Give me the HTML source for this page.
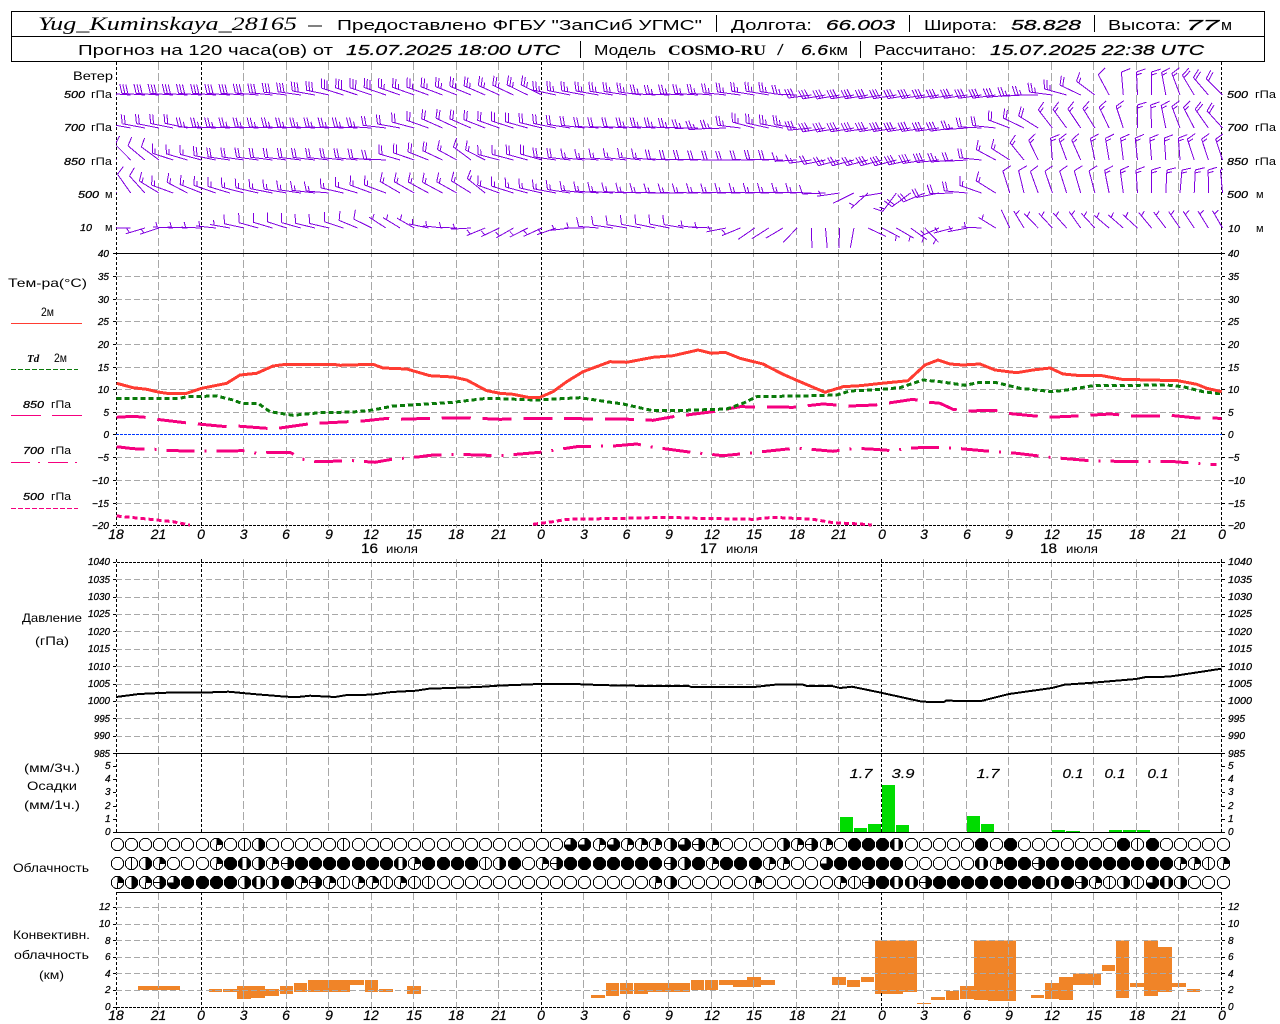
<!DOCTYPE html>
<html lang="ru">
<head>
<meta charset="utf-8">
<title>Yug_Kuminskaya_28165</title>
<style>
html,body{margin:0;padding:0;background:#fff;width:1280px;height:1024px;overflow:hidden}
svg{display:block;position:absolute;left:0;top:0}
text{font-family:"Liberation Sans",sans-serif;fill:#000;white-space:pre}
.h{font-size:15px}
.hi{font-size:15px;font-style:italic;stroke:#000;stroke-width:.25}
.s{font-size:12px}
.si{font-size:11px;font-style:italic;font-weight:bold}
.y{font-size:10px;font-style:italic;stroke:#000;stroke-width:.25}
.p{font-size:10px;font-style:italic;stroke:#000;stroke-width:.25}
.x{font-size:14px;font-style:italic;text-anchor:middle;stroke:#000;stroke-width:.2}
.v{font-size:13px;font-style:italic;text-anchor:middle;stroke:#000;stroke-width:.15}
</style>
</head>
<body>
<svg id="g" width="1280" height="1024" viewBox="0 0 1280 1024" xmlns="http://www.w3.org/2000/svg">
<g id="shapes" shape-rendering="crispEdges"></g>

<!-- header -->
<text x="38" y="30" style="font-family:'Liberation Serif',serif;font-style:italic;font-size:19px" textLength="259">Yug_Kuminskaya_28165</text>
<text class="h" x="308" y="30" textLength="14">—</text>
<text class="h" x="337" y="30" textLength="365">Предоставлено ФГБУ "ЗапСиб УГМС"</text>
<text class="h" x="731" y="30" textLength="81">Долгота:</text>
<text class="hi" x="826" y="30" textLength="69">66.003</text>
<text class="h" x="924" y="30" textLength="73">Широта:</text>
<text class="hi" x="1011" y="30" textLength="70">58.828</text>
<text class="h" x="1108" y="30" textLength="73">Высота:</text>
<text class="hi" x="1186" y="30" textLength="33">77</text>
<text class="h" x="1221" y="30" textLength="11">м</text>

<text class="h" x="78" y="55" textLength="255">Прогноз на 120 часа(ов) от</text>
<text class="hi" x="346" y="55" textLength="214">15.07.2025 18:00 UTC</text>
<text class="h" x="594" y="55" textLength="62">Модель</text>
<text x="668" y="55" style="font-family:'Liberation Serif',serif;font-weight:bold;font-size:15px" textLength="98">COSMO-RU</text>
<text class="hi" x="778" y="55">/</text>
<text class="hi" x="801" y="55" textLength="27">6.6</text>
<text class="h" x="829" y="55" textLength="19">км</text>
<text class="h" x="874" y="55" textLength="102">Рассчитано:</text>
<text class="hi" x="990" y="55" textLength="214">15.07.2025 22:38 UTC</text>

<!-- wind labels -->
<text class="s" x="73" y="80" textLength="40">Ветер</text>
<text class="y" x="64" y="98" textLength="21">500</text><text class="s" x="91" y="98" textLength="21" style="font-size:11px">гПа</text>
<text class="y" x="64" y="131" textLength="21">700</text><text class="s" x="91" y="131" textLength="21" style="font-size:11px">гПа</text>
<text class="y" x="64" y="165" textLength="21">850</text><text class="s" x="91" y="165" textLength="21" style="font-size:11px">гПа</text>
<text class="y" x="78" y="198" textLength="21">500</text><text class="s" x="105" y="198" style="font-size:11px">м</text>
<text class="y" x="80" y="231" textLength="12">10</text><text class="s" x="105" y="231" style="font-size:11px">м</text>
<text class="y" x="1227" y="98" textLength="21">500</text><text class="s" x="1255" y="98" textLength="21" style="font-size:11px">гПа</text>
<text class="y" x="1227" y="131" textLength="21">700</text><text class="s" x="1255" y="131" textLength="21" style="font-size:11px">гПа</text>
<text class="y" x="1227" y="165" textLength="21">850</text><text class="s" x="1255" y="165" textLength="21" style="font-size:11px">гПа</text>
<text class="y" x="1227" y="198" textLength="21">500</text><text class="s" x="1256" y="198" style="font-size:11px">м</text>
<text class="y" x="1228" y="232" textLength="12">10</text><text class="s" x="1256" y="232" style="font-size:11px">м</text>

<!-- temperature legend -->
<text class="s" x="8" y="287" textLength="79">Тем-ра(°С)</text>
<text class="s" x="41" y="316" textLength="13">2м</text>
<text class="si" x="27" y="362" style="font-family:'Liberation Serif',serif">Td</text><text class="s" x="54" y="362" textLength="13">2м</text>
<text class="y" x="23" y="408" textLength="21">850</text><text class="s" x="51" y="408" textLength="20" style="font-size:11px">гПа</text>
<text class="y" x="23" y="454" textLength="21">700</text><text class="s" x="51" y="454" textLength="20" style="font-size:11px">гПа</text>
<text class="y" x="23" y="500" textLength="21">500</text><text class="s" x="51" y="500" textLength="20" style="font-size:11px">гПа</text>

<!-- temp y axis left -->
<g class="y" text-anchor="end">
<text class="y" x="109" y="257">40</text><text class="y" x="109" y="280">35</text><text class="y" x="109" y="303">30</text><text class="y" x="109" y="325">25</text><text class="y" x="109" y="348">20</text><text class="y" x="109" y="371">15</text><text class="y" x="109" y="393">10</text><text class="y" x="109" y="416">5</text><text class="y" x="109" y="438">0</text><text class="y" x="109" y="461">−5</text><text class="y" x="109" y="484">−10</text><text class="y" x="109" y="507">−15</text><text class="y" x="109" y="529">−20</text>
</g>
<g>
<text class="y" x="1228" y="257">40</text><text class="y" x="1228" y="280">35</text><text class="y" x="1228" y="303">30</text><text class="y" x="1228" y="325">25</text><text class="y" x="1228" y="348">20</text><text class="y" x="1228" y="371">15</text><text class="y" x="1228" y="393">10</text><text class="y" x="1228" y="416">5</text><text class="y" x="1228" y="438">0</text><text class="y" x="1228" y="461">−5</text><text class="y" x="1228" y="484">−10</text><text class="y" x="1228" y="507">−15</text><text class="y" x="1228" y="529">−20</text>
</g>

<!-- hours row 1 -->
<g>
<text class="x" x="116" y="539">18</text><text class="x" x="158.5" y="539">21</text><text class="x" x="201" y="539">0</text><text class="x" x="243.6" y="539">3</text><text class="x" x="286" y="539">6</text><text class="x" x="329" y="539">9</text><text class="x" x="371" y="539">12</text><text class="x" x="414" y="539">15</text><text class="x" x="456" y="539">18</text><text class="x" x="499" y="539">21</text><text class="x" x="541" y="539">0</text><text class="x" x="584" y="539">3</text><text class="x" x="626.5" y="539">6</text><text class="x" x="669" y="539">9</text><text class="x" x="712" y="539">12</text><text class="x" x="754" y="539">15</text><text class="x" x="797" y="539">18</text><text class="x" x="839" y="539">21</text><text class="x" x="882" y="539">0</text><text class="x" x="924" y="539">3</text><text class="x" x="967" y="539">6</text><text class="x" x="1009" y="539">9</text><text class="x" x="1052" y="539">12</text><text class="x" x="1094" y="539">15</text><text class="x" x="1137" y="539">18</text><text class="x" x="1179" y="539">21</text><text class="x" x="1222" y="539">0</text>
</g>
<text x="361" y="553" style="font-size:14px;stroke:#000;stroke-width:.2" textLength="17">16</text><text class="s" x="386" y="553" textLength="32">июля</text>
<text x="700" y="553" style="font-size:14px;stroke:#000;stroke-width:.2" textLength="17">17</text><text class="s" x="726" y="553" textLength="32">июля</text>
<text x="1040" y="553" style="font-size:14px;stroke:#000;stroke-width:.2" textLength="17">18</text><text class="s" x="1066" y="553" textLength="32">июля</text>

<!-- pressure -->
<text class="s" x="22" y="622" textLength="60">Давление</text>
<text class="s" x="35" y="645" textLength="34">(гПа)</text>
<g>
<text class="p" x="88" y="565" textLength="22">1040</text><text class="p" x="88" y="583" textLength="22">1035</text><text class="p" x="88" y="600" textLength="22">1030</text><text class="p" x="88" y="617" textLength="22">1025</text><text class="p" x="88" y="635" textLength="22">1020</text><text class="p" x="88" y="652" textLength="22">1015</text><text class="p" x="88" y="670" textLength="22">1010</text><text class="p" x="88" y="687" textLength="22">1005</text><text class="p" x="88" y="704" textLength="22">1000</text><text class="p" x="94" y="722" textLength="16">995</text><text class="p" x="94" y="739" textLength="16">990</text><text class="p" x="94" y="757" textLength="16">985</text>
<text class="p" x="1228" y="565" textLength="24">1040</text><text class="p" x="1228" y="583" textLength="24">1035</text><text class="p" x="1228" y="600" textLength="24">1030</text><text class="p" x="1228" y="617" textLength="24">1025</text><text class="p" x="1228" y="635" textLength="24">1020</text><text class="p" x="1228" y="652" textLength="24">1015</text><text class="p" x="1228" y="670" textLength="24">1010</text><text class="p" x="1228" y="687" textLength="24">1005</text><text class="p" x="1228" y="704" textLength="24">1000</text><text class="p" x="1228" y="722" textLength="17">995</text><text class="p" x="1228" y="739" textLength="17">990</text><text class="p" x="1228" y="757" textLength="17">985</text>
</g>

<!-- precip -->
<text class="s" x="24" y="772" textLength="56">(мм/3ч.)</text>
<text class="s" x="27" y="790" textLength="50">Осадки</text>
<text class="s" x="24" y="809" textLength="56">(мм/1ч.)</text>
<g>
<text class="y" x="105" y="769">5</text><text class="y" x="105" y="782">4</text><text class="y" x="105" y="795">3</text><text class="y" x="105" y="809">2</text><text class="y" x="105" y="822">1</text><text class="y" x="105" y="835">0</text>
<text class="y" x="1228" y="769">5</text><text class="y" x="1228" y="782">4</text><text class="y" x="1228" y="795">3</text><text class="y" x="1228" y="809">2</text><text class="y" x="1228" y="822">1</text><text class="y" x="1228" y="835">0</text>
</g>
<text class="v" x="861" y="778" textLength="23">1.7</text><text class="v" x="903" y="778" textLength="23">3.9</text><text class="v" x="988" y="778" textLength="23">1.7</text><text class="v" x="1073" y="778" textLength="21">0.1</text><text class="v" x="1115" y="778" textLength="21">0.1</text><text class="v" x="1158" y="778" textLength="21">0.1</text>

<text class="s" x="13" y="872" textLength="76">Облачность</text>
<text class="s" x="13" y="939" textLength="77">Конвективн.</text>
<text class="s" x="14" y="959" textLength="75">облачность</text>
<text class="s" x="39" y="979" textLength="25">(км)</text>

<g>
<text class="y" x="99" y="910">12</text><text class="y" x="99" y="927">10</text><text class="y" x="105" y="944">8</text><text class="y" x="105" y="960">6</text><text class="y" x="105" y="977">4</text><text class="y" x="105" y="993">2</text><text class="y" x="105" y="1010">0</text>
<text class="y" x="1228" y="910">12</text><text class="y" x="1228" y="927">10</text><text class="y" x="1228" y="944">8</text><text class="y" x="1228" y="960">6</text><text class="y" x="1228" y="977">4</text><text class="y" x="1228" y="993">2</text><text class="y" x="1228" y="1010">0</text>
</g>

<!-- hours row 2 -->
<g>
<text class="x" x="116" y="1020">18</text><text class="x" x="158.5" y="1020">21</text><text class="x" x="201" y="1020">0</text><text class="x" x="243.6" y="1020">3</text><text class="x" x="286" y="1020">6</text><text class="x" x="329" y="1020">9</text><text class="x" x="371" y="1020">12</text><text class="x" x="414" y="1020">15</text><text class="x" x="456" y="1020">18</text><text class="x" x="499" y="1020">21</text><text class="x" x="541" y="1020">0</text><text class="x" x="584" y="1020">3</text><text class="x" x="626.5" y="1020">6</text><text class="x" x="669" y="1020">9</text><text class="x" x="712" y="1020">12</text><text class="x" x="754" y="1020">15</text><text class="x" x="797" y="1020">18</text><text class="x" x="839" y="1020">21</text><text class="x" x="882" y="1020">0</text><text class="x" x="924" y="1020">3</text><text class="x" x="967" y="1020">6</text><text class="x" x="1009" y="1020">9</text><text class="x" x="1052" y="1020">12</text><text class="x" x="1094" y="1020">15</text><text class="x" x="1137" y="1020">18</text><text class="x" x="1179" y="1020">21</text><text class="x" x="1222" y="1020">0</text>
</g>
</svg>
<script>
(function(){
var NS="http://www.w3.org/2000/svg",root=document.getElementById("shapes");
function el(n,a,p){var e=document.createElementNS(NS,n);for(var k in a)e.setAttribute(k,a[k]);(p||root).appendChild(e);return e;}
function line(x1,y1,x2,y2,c,w,d,p){var a={x1:x1,y1:y1,x2:x2,y2:y2,stroke:c,"stroke-width":w||1};if(d)a["stroke-dasharray"]=d;return el("line",a,p);}
function poly(pts,c,w,d){var s=pts.map(function(p){return p[0]+","+p[1]}).join(" ");var a={points:s,fill:"none",stroke:c,"stroke-width":w,"stroke-linejoin":"round"};if(d)a["stroke-dasharray"]=d;return el("polyline",a);}
var GR="#a8a8a8",X0=116.5,DX=14.18;

/* stretch glyphs to the measured widths instead of widening gaps */
Array.prototype.forEach.call(document.querySelectorAll("text[textLength]"),function(t){t.setAttribute("lengthAdjust","spacingAndGlyphs");});

/* header box */
el("rect",{x:11.5,y:11.5,width:1253,height:50,fill:"none",stroke:"#000"});
line(11,36.5,1265,36.5,"#000",1);
[[716,15,32],[909,15,32],[1094,15,32],[580,41,58],[860,41,58]].forEach(function(v){line(v[0]+.5,v[1],v[0]+.5,v[2],"#000",1)});

/* convective bars */
var O="#f08428";
function bar(x1,x2,y1,y2){el("rect",{x:x1,y:y1,width:x2-x1,height:y2-y1,fill:O});}
[[36,78,681,705],[81,120,690,711],[123,162,681,696],[165,249,572,732],[249,291,572,726],[291,333,759,762],[333,375,741,750],[378,417,723,750],[420,462,708,747],[462,504,572,750],[504,588,572,753],[633,672,735,744],[675,717,699,747],[717,759,681,750],[759,843,671,705],[846,885,645,663],[888,927,572,744],[930,972,699,711],[972,1014,572,738],[1014,1056,591,726],[1056,1098,699,711],[1101,1140,717,726]]
.forEach(function(b){bar(820+b[0]/3,820+b[1]/3,750+b[2]/3,750+b[3]/3)});
[[414,540,708,720],[627,666,717,726],[669,711,717,726],[711,753,708,747],[753,795,708,744],[795,837,717,738],[840,879,708,732],[882,921,699,726],[924,1050,690,726],[1050,1092,690,705],[1095,1134,690,726],[1137,1179,717,726],[1221,1263,708,732]]
.forEach(function(b){bar(b[0]/3,b[1]/3,750+b[2]/3,750+b[3]/3)});
[[183,225,495,504],[228,267,459,498],[270,309,459,492],[312,354,459,492],[354,480,459,486],[483,522,450,480],[525,564,450,480],[567,609,450,465],[609,651,450,471],[651,693,441,471],[693,735,450,465]]
.forEach(function(b){bar(530+b[0]/3,530+b[1]/3,830+b[2]/3,830+b[3]/3)});

/* precipitation bars */
[[840,853,817],[854,867,828],[868,881,824],[882,895,785],[896,909,825],[967,980,816],[981,994,824],[1052,1065,830],[1066,1080,831],[1109,1122,830],[1123,1136,830],[1137,1150,830]]
.forEach(function(b){el("rect",{x:b[0],y:b[2],width:b[1]-b[0],height:832-b[2],fill:"#00dc00"})});

/* vertical grid */
var segs=[[62,528],[559,832],[892,1010]];
for(var k=0;k<=26;k++){
  var x=Math.floor(116+42.5*k)+.5,mid=(k-2)%8===0;
  segs.forEach(function(s,si){
    if(k==18&&si==2){line(x,892,x,940,"#000",1,"3 2");line(x,993,x,1010,"#000",1,"3 2");}
    else if(mid||k==26||k==0)line(x,s[0],x,s[1],"#000",1,"3 2");
    else line(x,s[0],x,s[1],GR,1,"8 3");
  });
}
/* horizontal grid */
function hg(y){line(116,y+.5,1222,y+.5,GR,1,"6 3");}
[276,299,321,344,367,389,412,457,480,503].forEach(hg);
[579,597,614,631,649,666,684,701,718,736].forEach(hg);
[907,924,940,957,973,990].forEach(hg);
line(116,434.5,1222,434.5,"#0038ff",1,"3 1");

/* axes */
line(113,253.5,1222,253.5,"#000",1);
line(113,525.5,1225,525.5,"#000",1,"3 1");
line(113,562.5,1225,562.5,"#000",1,"3 1");
line(113,753.5,1225,753.5,"#000",1);
line(116,832.5,1222,832.5,"#000",1);
line(116,892.5,1222,892.5,"#000",1);
line(113,1007.5,1225,1007.5,"#000",1,"3 1");
/* ticks */
var tk=[253,276,299,321,344,367,389,412,434,457,480,503,525,562,579,597,614,631,649,666,684,701,718,736,753,766,779,792,806,819,832,907,924,940,957,973,990,1007];
tk.forEach(function(y){line(113,y+.5,116,y+.5,"#000",1);line(1222,y+.5,1225,y+.5,"#000",1);});

/* curves */
var red=[[116.7,383.3],[133,387.7],[146.7,389.3],[158,392],[166.7,393.3],[186.7,393.3],[201.7,388.3],[226.7,383.3],[240,375],[256.7,373.3],[273,366],[286,364.3],[333,364.3],[340,365.3],[373,364.3],[383,368],[406.7,369],[430,375.7],[453,377],[466.7,380],[486.7,390.7],[500,393.3],[513,394.3],[528,397.3],[540,397.3],[553,391.7],[566.7,381.7],[583,371.7],[610,361.7],[626.7,362.3],[653,357.3],[673,355.7],[698,350],[711.7,353.3],[725,352.3],[740,358.3],[763,364],[783,374.3],[800,381.7],[825,392.3],[843,386.7],[860,385.7],[881.7,383.3],[908,380.7],[925,365],[938,360],[950,364],[963,365],[980,364],[995,370],[1016.7,372.7],[1033,370],[1050,368],[1063,374],[1076.7,375.3],[1100,375.3],[1121.7,379.3],[1178,380.7],[1196.7,384.3],[1206.7,388.3],[1221.7,391.7]];
var green=[[116.7,398.7],[180,398.3],[186.7,396.7],[216.7,396],[233,400],[241.7,403.3],[258,403.3],[270,411.7],[293,415.3],[320,412.7],[353,412],[373,410],[393,406],[420,404.3],[453,402.3],[486.7,398.3],[536.7,400],[580,397.7],[606.7,401.7],[623,404],[653,410.7],[686.7,410.3],[726.7,409],[743,403.3],[756.7,396.7],[813,395.7],[836.7,395],[850,391],[881.7,389.3],[900,387.7],[923,380],[940,381.7],[965,385.3],[980,382.3],[995,382.3],[1020,388.3],[1053,391.7],[1066.7,390],[1093,385.7],[1166.7,385],[1183,386.7],[1203,391.7],[1221.7,394]];
var p850=[[116.7,417.3],[133,416.3],[145,417.3],[156.7,419.3],[185,422.7],[198,424],[226.7,426.7],[236.7,426],[266.7,428.3],[278,428.3],[308,424],[318,423.3],[348,421.7],[360,421.3],[388,418.3],[400,419.3],[430,418.3],[470,418],[500,419.3],[540,418.3],[633,419.3],[653,420.3],[673,416.7],[686.7,415],[713,411.7],[740,406.7],[793,407.3],[823,404],[850,406],[875,405],[886.7,403.3],[913,399.3],[926.7,402],[940,403.3],[953,409.3],[966.7,411],[995,410.3],[1006.7,413.3],[1035,416],[1048,417.3],[1076.7,416],[1110,414],[1133,416],[1156.7,416],[1170,415.3],[1196.7,418],[1221.7,418.3]];
var p700=[[116.7,446.7],[133,448.7],[156.7,449.3],[170,450.7],[216.7,451],[243,450.7],[256.7,453.3],[266.7,452.7],[290,452.3],[301.7,459],[316.7,461.7],[353,460.7],[375,462.3],[391.7,459.3],[420,456.7],[430,455.3],[456.7,454.3],[500,455.7],[540,452.3],[576.7,446.7],[613,446],[636.7,444],[650,446.7],[686.7,451.7],[723,455.7],[753,452.7],[796.7,448],[833,451.3],[855,448.3],[870,449],[893,450.7],[910,448],[933,447.3],[956.7,448.3],[983,450.7],[1016.7,453.3],[1050,457.3],[1090,460.7],[1133,461.7],[1170,461.3],[1206.7,464.3],[1216.7,464.3]];
var p5a=[[116.7,516],[150,519.3],[173,521.7],[190,525]];
var p5b=[[533,524.3],[553,521.7],[566.7,519.3],[626.7,518.3],[666.7,517.3],[696.7,518.3],[753,519.3],[773,517.3],[813,519.3],[833,522.7],[860,524],[871.7,525]];
var press=[[116,697],[139,694],[167,692.7],[200,692.7],[228.6,691.7],[253,694],[286,696.7],[298,697],[310,695.7],[335,697],[347,695],[371,694.7],[392,692],[416,690.7],[429,688.7],[449,688],[478,687],[498,685.7],[539,684],[588,684.3],[596,685],[648,686],[689,686],[691,687],[754,687],[775,684.7],[803,684.7],[807,686],[832,686],[840,688],[852,686.7],[881,692.7],[922,701.7],[944,702],[946,700.7],[981,701],[1009,694],[1052,688],[1064.5,684.7],[1093,682.7],[1136,679],[1146,677],[1168.6,676.7],[1221.6,668.7]];
var PK="#f5007f";
poly(press,"#000",2);
poly(p850,PK,3,"29 11.8");
poly(p700,PK,3,"28 10 2 10");
poly(p5a,PK,3,"5 3");
poly(p5b,PK,3,"5 3");
poly(green,"#0a7a0a",3,"5 3");
poly(red,"#ff3c32",3);

/* legends */
line(11,323.5,82,323.5,"#ff3c32",1);
line(11,369.5,78,369.5,"#0a7a0a",1,"5 2");
line(11,415.5,41,415.5,PK,1);line(52,415.5,82,415.5,PK,1);
line(11,462.5,30,462.5,PK,1);line(38,462.5,40,462.5,PK,1);line(48,462.5,68,462.5,PK,1);line(75,462.5,77,462.5,PK,1);
line(11,508.5,78,508.5,PK,1,"5 2");

/* wind barbs */
var rows=[
{y:95,L:23,k:[[116,4,6],[250,4,6],[300,8,6],[330,12,6],[345,18,6],[430,20,5],[541,27,5],[555,12,5],[600,10,5],[640,8,5],[660,2,5],[720,5,5],[760,10,5],[790,8,5],[800,0,5],[815,-10,6],[1000,-8,6],[1040,0,5],[1066,15,5],[1080,25,4],[1094,35,3],[1108,60,2],[1122,85,2],[1151,90,3],[1179,70,3],[1207,50,4],[1222,45,4]]},
{y:128,L:23,k:[[116,10,4],[200,12,4],[201,3,5],[370,3,5],[400,10,4],[430,20,4],[450,26,4],[541,14,4],[600,4,4],[680,3,5],[720,-6,5],[753,15,5],[800,8,5],[815,-10,6],[960,-8,6],[980,3,4],[993,3,4],[1008,20,4],[1037,30,4],[1051,52,3],[1094,58,3],[1122,70,3],[1137,90,3],[1151,88,3],[1179,70,3],[1222,48,4]]},
{y:160,L:22,k:[[116,48,2],[131,45,2],[145,40,2],[158,38,2],[173,18,3],[201,15,3],[230,8,4],[370,6,4],[385,2,4],[400,16,4],[430,22,4],[456,28,3],[469,38,3],[484,28,3],[500,14,3],[541,16,4],[555,8,4],[600,5,3],[647,7,3],[670,3,4],[740,0,4],[780,3,4],[810,-8,3],[840,-15,5],[900,-15,6],[930,-8,6],[970,-3,4],[980,3,4],[993,28,3],[1008,30,3],[1023,50,3],[1037,62,3],[1051,87,3],[1066,70,3],[1080,65,3],[1094,78,3],[1122,83,3],[1179,87,3],[1193,72,3],[1222,72,3]]},
{y:193,L:23,k:[[116,50,2],[131,55,2],[145,48,2],[158,32,3],[173,20,3],[187,28,3],[200,22,3],[240,15,3],[330,5,3],[340,12,3],[371,20,3],[385,20,3],[400,30,3],[441,28,3],[469,30,3],[483,42,3],[498,20,3],[541,13,3],[560,10,3],[600,5,3],[668,1,3],[810,2,3],[838,-6,1],[853,-25,0],[867,-45,1],[881,-5,0],[895,-55,3],[916,-30,4],[928,-20,4],[950,-3,4],[965,3,4],[980,18,3],[995,30,3],[1010,73,2],[1023,77,2],[1037,70,2],[1094,75,2],[1122,82,3],[1151,90,3],[1179,95,3],[1193,93,3],[1207,90,3],[1222,85,2]]},
{y:228,L:20,k:[[116,0,0],[131,0,0],[145,-17,1],[158,-20,1],[170,3,1],[201,2,1],[230,10,1],[243,12,2],[256,15,2],[285,18,2],[327,12,2],[342,18,2],[356,22,2],[371,26,2],[385,33,1],[414,30,1],[430,10,1],[470,-2,1],[483,-22,1],[498,-25,1],[512,-30,1],[540,-25,1],[553,-22,1],[568,-8,1],[584,0,1],[610,8,2],[660,12,2],[683,10,2],[710,5,1],[725,-10,1],[738,-20,1],[753,-35,0],[782,-30,0],[796,-42,0],[811,-92,0],[825,-95,0],[839,-88,0],[853,-75,0],[867,-155,0],[895,-150,1],[924,-140,1],[938,-25,1],[952,-15,1],[966,-12,1],[980,0,1],[995,30,1],[1009,65,0],[1023,60,1],[1037,46,1],[1066,48,1],[1080,55,1],[1108,40,1],[1137,42,1],[1151,50,1],[1179,55,1],[1222,60,1]]}
];
var defs=el("defs",{});
var cp=el("clipPath",{id:"wc"},defs);el("rect",{x:116,y:62,width:1107,height:191},cp);
var wg=el("g",{"clip-path":"url(#wc)"});
function at(k,x){
  if(x<=k[0][0])return [k[0][1],k[0][2]];
  for(var i=1;i<k.length;i++){if(x<=k[i][0]){var a=k[i-1],b=k[i],t=(x-a[0])/(b[0]-a[0]);return [a[1]+(b[1]-a[1])*t,a[2]+(b[2]-a[2])*t];}}
  var l=k[k.length-1];return [l[1],l[2]];
}
rows.forEach(function(r){
  var d="";
  for(var i=0;i<=78;i++){
    var x=X0+DX*i,v=at(r.k,x),th=v[0]*Math.PI/180,f=Math.round(v[1]);
    var ux=-Math.cos(th),uy=-Math.sin(th),tx=x+ux*r.L,ty=r.y+uy*r.L;
    d+="M"+x.toFixed(1)+" "+r.y+"L"+tx.toFixed(1)+" "+ty.toFixed(1);
    var phi=Math.atan2(uy,ux)+73*Math.PI/180,fx=Math.cos(phi),fy=Math.sin(phi),pos=r.L,n=f;
    if(f===1)pos=r.L-4;
    while(n>0){
      var len=n>=2?9.5:5.5,px=x+ux*pos,py=r.y+uy*pos;
      d+="M"+px.toFixed(1)+" "+py.toFixed(1)+"L"+(px+fx*len).toFixed(1)+" "+(py+fy*len).toFixed(1);
      n-=2;pos-=3;
    }
  }
  el("path",{d:d,fill:"none",stroke:"#8000e0","stroke-width":1},wg);
});

/* clouds */
var cl=[
".......q.vh.....v"+"..............."+"bbqbqqqhb+q"+"...."+"hq+q"+"."+"###s"+"....."+"#.#"+"......."+"#v#"+".....",
".vhq...q#shq+#######sq#"+"###vh#."+"q+#######+h#q###qq..b"+"#####"+"....."+"sq##+#########qqvq",
"qhq+b####hsh#q+qvqqvqvv"+"..............."+"qh"+"....."+"q"+"....."+"qv+#ss+########s#+qvhvbsh"+"..."
];
var R=6.2;
function sym(x,y,c){
  el("circle",{cx:x,cy:y,r:R,fill:c==="#"||c==="s"?"#000":"#fff",stroke:"#000","stroke-width":1});
  if(c==="q"){
    el("path",{d:"M"+x+" "+y+"L"+x+" "+(y-R)+"A"+R+" "+R+" 0 0 1 "+(x+R)+" "+y+"Z",fill:"#000"});
    line(x,y,x,y+R,"#000",1);
    line(x,y,x+R,y,"#000",1);
  }else if(c==="h"||c==="+"){
    el("path",{d:"M"+x+" "+(y-R)+"A"+R+" "+R+" 0 0 1 "+x+" "+(y+R)+"Z",fill:"#000"});
    if(c==="+")line(x-R,y,x,y,"#000",1);
  }else if(c==="v"){
    line(x,y-R,x,y+R,"#000",1);
  }else if(c==="b"){
    el("path",{d:"M"+x+" "+y+"L"+x+" "+(y-R)+"A"+R+" "+R+" 0 1 1 "+(x-R)+" "+y+"Z",fill:"#000"});
  }else if(c==="s"){
    el("rect",{x:x-2,y:y-R+.5,width:4,height:2*R-1,fill:"#fff"});
  }
}
var ys=[844.5,863.5,882.5];
cl.forEach(function(s,r){for(var i=0;i<s.length&&i<=78;i++)sym(Math.round(X0+DX*i)+.5,ys[r],s.charAt(i));});
})();
</script>
</body>
</html>
